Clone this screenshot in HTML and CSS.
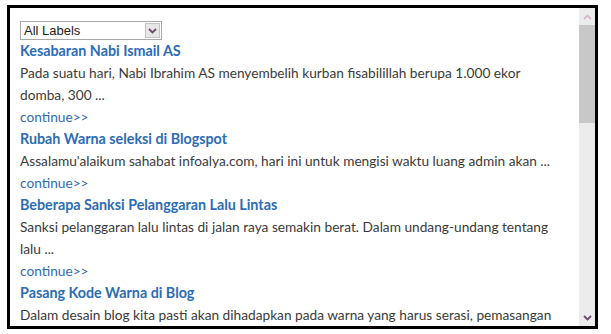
FILE: index.html
```html
<!DOCTYPE html>
<html>
<head>
<meta charset="utf-8">
<link rel="stylesheet" href="styles.css">
</head>
<body>
<div class="frame">
  <div class="content">
    <div class="select">
      <span class="select-text">All Labels</span>
      <span class="select-btn"><svg width="9" height="6" viewBox="0 0 9 6"><path d="M1 1 L4.5 4.5 L8 1" fill="none" stroke="#6b4a6b" stroke-width="1.8"/></svg></span>
    </div>
    <div class="post">
      <a class="title">Kesabaran Nabi Ismail AS</a>
      <p class="excerpt">Pada suatu hari, Nabi Ibrahim AS menyembelih kurban fisabilillah berupa 1.000 ekor domba, 300 ...</p>
      <a class="more">continue&gt;&gt;</a>
    </div>
    <div class="post">
      <a class="title">Rubah Warna seleksi di Blogspot</a>
      <p class="excerpt">Assalamu'alaikum sahabat infoalya.com, hari ini untuk mengisi waktu luang admin akan ...</p>
      <a class="more">continue&gt;&gt;</a>
    </div>
    <div class="post">
      <a class="title">Beberapa Sanksi Pelanggaran Lalu Lintas</a>
      <p class="excerpt">Sanksi pelanggaran lalu lintas di jalan raya semakin berat. Dalam undang-undang tentang lalu ...</p>
      <a class="more">continue&gt;&gt;</a>
    </div>
    <div class="post">
      <a class="title">Pasang Kode Warna di Blog</a>
      <p class="excerpt">Dalam desain blog kita pasti akan dihadapkan pada warna yang harus serasi, pemasangan warna ...</p>
      <a class="more">continue&gt;&gt;</a>
    </div>
  </div>
  <div class="scrollbar">
    <div class="arrow up"><svg width="9" height="6" viewBox="0 0 9 6"><path d="M1 5 L4.5 1.5 L8 5" fill="none" stroke="#d9b8cc" stroke-width="1.8"/></svg></div>
    <div class="thumb"></div>
    <div class="track"></div>
    <div class="arrow down"><svg width="9" height="6" viewBox="0 0 9 6"><path d="M1 1 L4.5 4.5 L8 1" fill="none" stroke="#6b4a6b" stroke-width="1.8"/></svg></div>
  </div>
</div>
</body>
</html>
```
FILE: styles.css
```css
html, body {
  margin: 0;
  padding: 0;
  background: #fff;
}
body {
  padding: 5px 0 0 7px;
}
.frame {
  width: 585px;
  height: 318px;
  border: 3px solid #000;
  display: flex;
  overflow: hidden;
  background: #fff;
}
.content {
  flex: 1;
  padding: 13px 12px 0 10px;
  overflow: hidden;
  font-family: Lato, "Open Sans", sans-serif;
  font-size: 13.7px;
  line-height: 22px;
  color: #3a3a3a;
}
.select {
  width: 140px;
  height: 17px;
  border: 1px solid #a8a8a8;
  display: flex;
  align-items: center;
  font-family: "Liberation Sans", Arial, sans-serif;
  font-size: 13px;
  line-height: 17px;
  color: #222;
  box-sizing: content-box;
}
.select-text {
  flex: 1;
  padding-left: 3px;
}
.select-btn {
  width: 15px;
  height: 15px;
  margin-right: 1px;
  background: #e6e6e6;
  border: 1px solid #c4c4c4;
  box-sizing: border-box;
  display: flex;
  align-items: center;
  justify-content: center;
}
.post {
  display: flex;
  flex-direction: column;
}
.title {
  font-weight: bold;
  font-size: 14.3px;
  color: #2b6cb5;
}
.excerpt {
  margin: 0;
}
.more {
  color: #3568b5;
}
.scrollbar {
  width: 16px;
  background: #ececec;
  display: flex;
  flex-direction: column;
}
.arrow {
  height: 17px;
  display: flex;
  align-items: center;
  justify-content: center;
}
.thumb {
  height: 98px;
  background: #c8c8c8;
}
.track {
  flex: 1;
}
```
